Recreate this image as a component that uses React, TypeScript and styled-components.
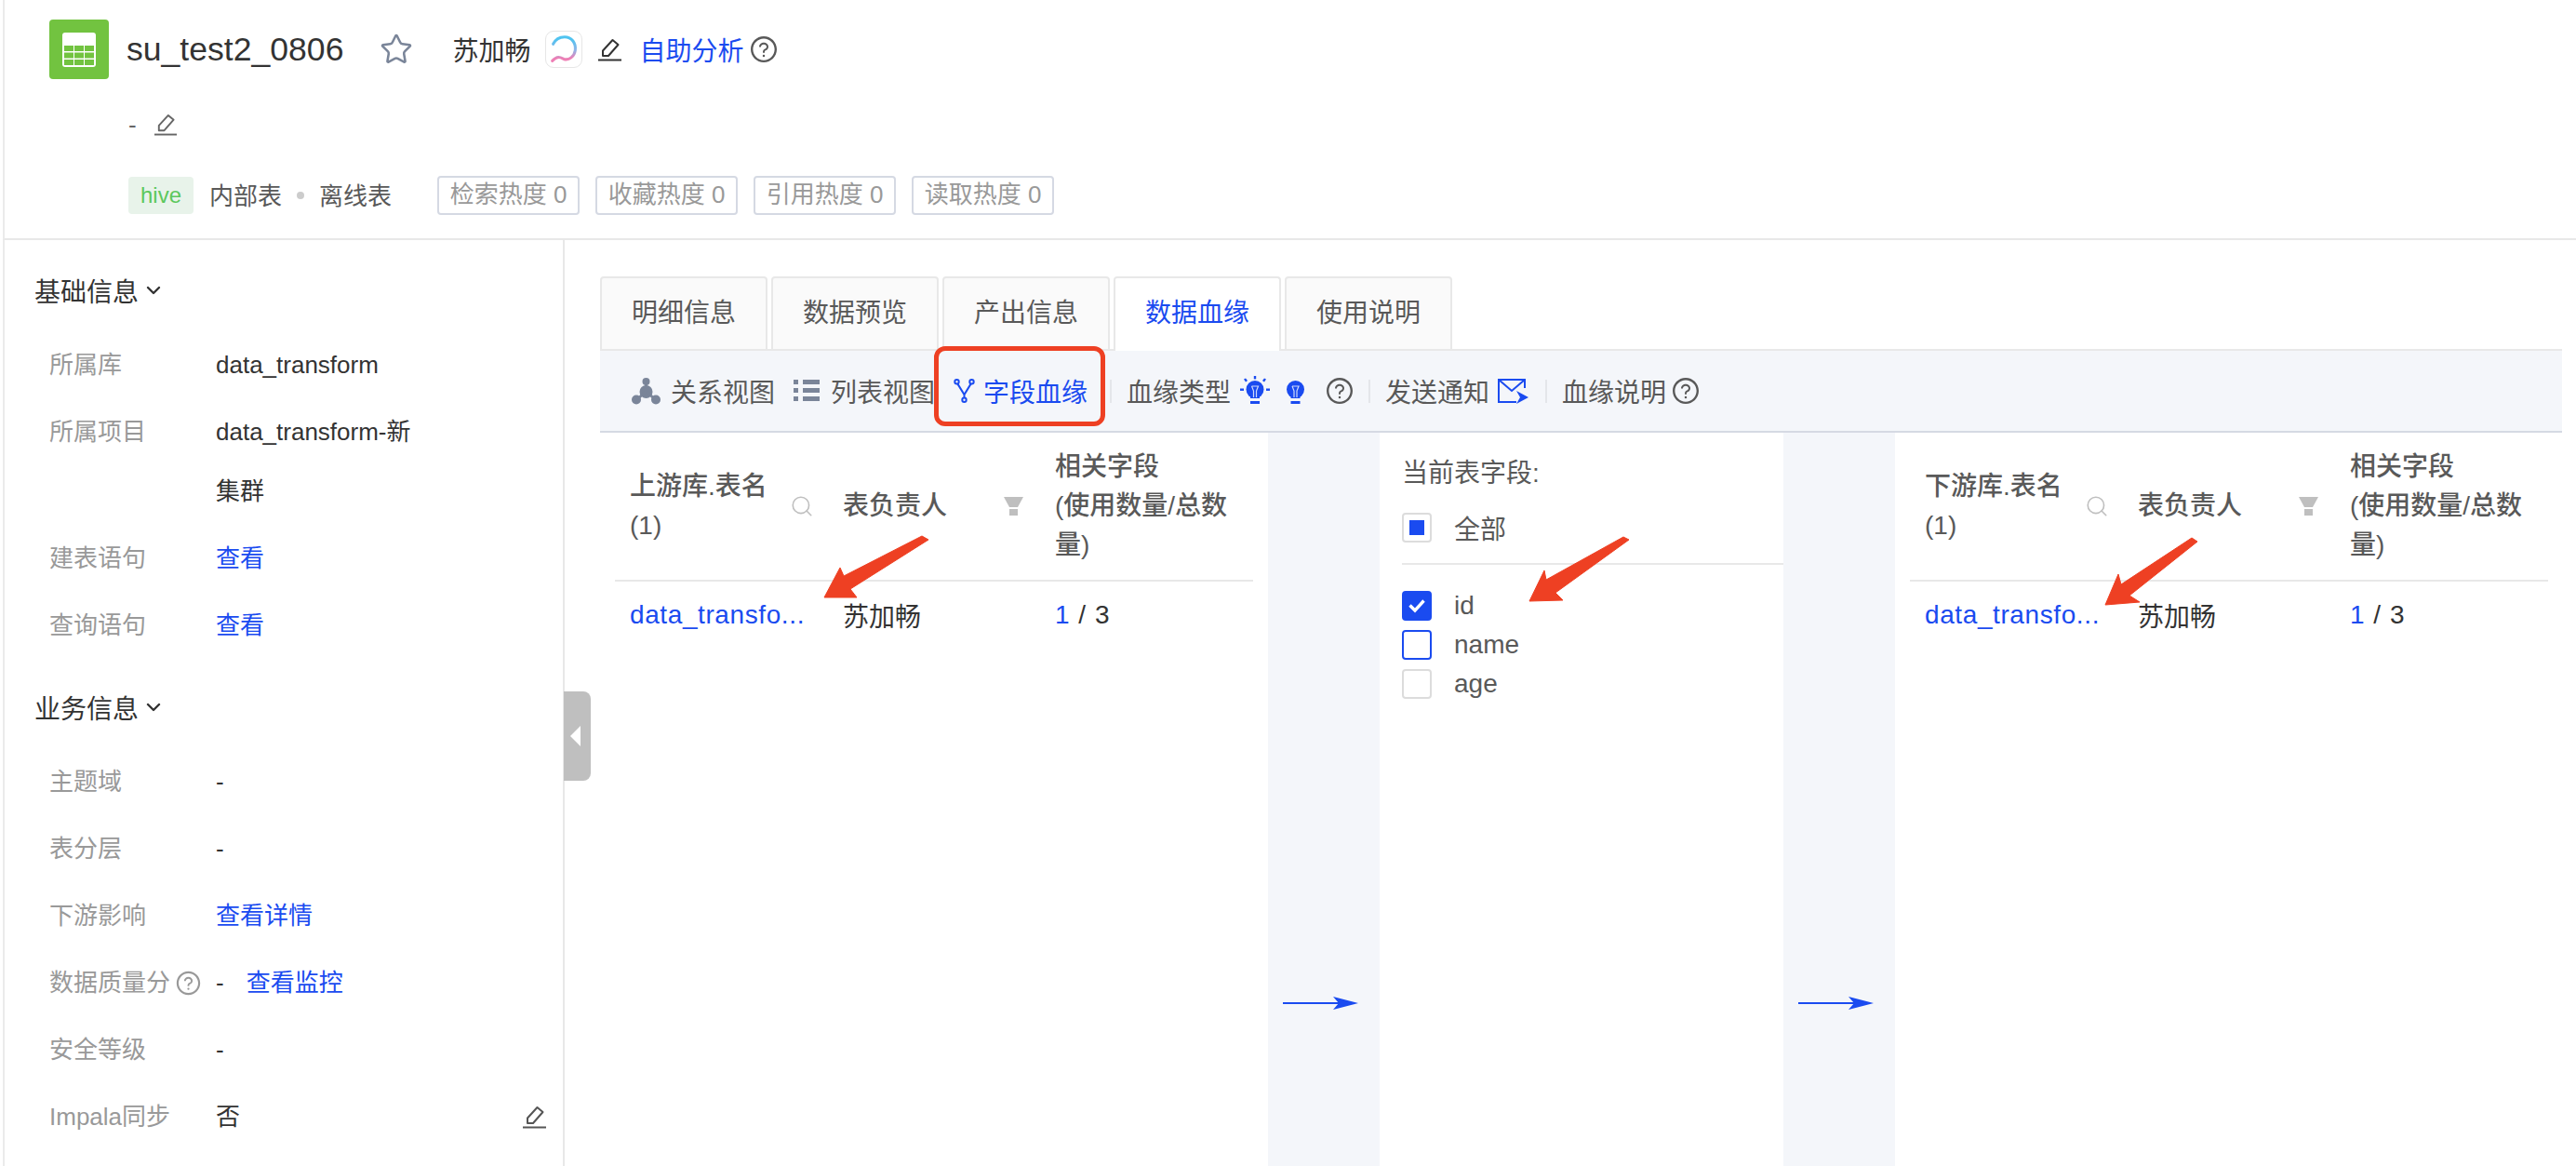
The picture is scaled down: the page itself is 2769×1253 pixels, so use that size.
import { type FC } from "react";
import { AiOutlineQuestionCircle } from "react-icons/ai";
import { ChevronDown, Search, Star } from "lucide-react";
import { createGlobalStyle, styled } from "styled-components";

const BLUE = "#1a4bf0";

const GlobalStyle = createGlobalStyle`
  html, body {
    margin: 0;
    padding: 0;
    background: #fff;
  }
  * {
    box-sizing: border-box;
  }
  body {
    font-family: "Liberation Sans", "Noto Sans CJK SC", sans-serif;
    color: #333;
  }
`;

const Page = styled.div`
  position: relative;
  width: 2769px;
  height: 1253px;
  overflow: hidden;
  background: #fff;
`;

/* header */

const Header = styled.header`
  height: 258px;
  margin-left: 3px;
  padding: 21px 0 0 48px;
  border-left: 2px solid #ebebeb;
  border-bottom: 2px solid #e8e8e8;
`;

const TitleRow = styled.div`
  display: flex;
  align-items: center;
  height: 64px;
`;

const Logo = styled.div`
  display: flex;
  align-items: center;
  justify-content: center;
  width: 64px;
  height: 64px;
  border-radius: 4px;
  background: #72c340;
  margin-right: 19px;
`;

const Title = styled.h1`
  margin: 0 39px 0 0;
  font-size: 35.6px;
  font-weight: 400;
  color: #333;
  white-space: nowrap;
`;

const Owner = styled.span`
  font-size: 28px;
  margin: 0 16px 0 42px;
  color: #333;
`;

const Avatar = styled.div`
  display: flex;
  align-items: center;
  justify-content: center;
  width: 40px;
  height: 40px;
  border: 1px solid #e6e6e6;
  border-radius: 9px;
  margin-right: 17px;
`;

const SelfLink = styled.a`
  font-size: 28px;
  color: ${BLUE};
  margin: 0 6px 0 19px;
`;

const DescRow = styled.div`
  display: flex;
  align-items: center;
  height: 32px;
  margin: 33px 0 0 85px;
  font-size: 26px;
  color: #666;
  gap: 19px;
`;

const MetaRow = styled.div`
  display: flex;
  align-items: center;
  height: 42px;
  margin: 39px 0 0 85px;
  font-size: 26px;
  color: #595959;
`;

const EngineTag = styled.span`
  height: 40px;
  line-height: 39px;
  padding: 0 13px;
  margin-right: 17px;
  border-radius: 4px;
  background: #e8f3ea;
  color: #5cc85c;
  font-size: 24px;
`;

const MetaText = styled.span`
  margin-top: -3px;
`;

const Dot = styled.i`
  width: 8px;
  height: 8px;
  margin: 0 16px;
  border-radius: 50%;
  background: #ccc;
`;

const HeatList = styled.div`
  display: flex;
  gap: 17px;
  margin-left: 49px;
`;

const HeatTag = styled.span`
  width: 153px;
  height: 42px;
  line-height: 36px;
  text-align: center;
  white-space: nowrap;
  border: 2px solid #d5d9e3;
  border-radius: 4px;
  color: #999;
  font-size: 26px;
`;

/* body */

const Body = styled.div`
  display: flex;
  height: 995px;
`;

const Sidebar = styled.aside`
  position: relative;
  flex: none;
  width: 604px;
  margin-left: 3px;
  padding: 34px 18px 0 32px;
  border-left: 2px solid #ebebeb;
  border-right: 2px solid #e8e8e8;
`;

const GroupTitle = styled.h3<{ $top?: number }>`
  display: flex;
  align-items: center;
  gap: 4px;
  height: 40px;
  margin: ${(p) => p.$top ?? 0}px 0 28px;
  font-size: 28px;
  font-weight: 400;
  color: #333;
`;

const InfoRow = styled.div`
  display: flex;
  margin: 0 0 8px 16px;
  font-size: 26px;
  line-height: 64px;
`;

const InfoLabel = styled.div`
  display: flex;
  align-items: center;
  flex: none;
  width: 179px;
  height: 64px;
  gap: 5px;
  color: #999;
  white-space: nowrap;
`;

const InfoValue = styled.div`
  flex: 1;
  max-width: 225px;
  color: #333;
`;

const TextLink = styled.a<{ $left?: number }>`
  color: ${BLUE};
  margin-left: ${(p) => p.$left ?? 0}px;
`;

const RowEdit = styled.div`
  display: flex;
  align-items: center;
  height: 64px;
  margin-left: auto;
`;

const CollapseHandle = styled.div`
  position: absolute;
  top: 485px;
  left: 601px;
  display: flex;
  align-items: center;
  justify-content: center;
  width: 29px;
  height: 96px;
  border-radius: 0 8px 8px 0;
  background: #bfbfbf;

  &::before {
    content: "";
    border-style: solid;
    border-width: 11px 11px 11px 0;
    border-color: transparent #fff transparent transparent;
    margin-right: 5px;
  }
`;

const Main = styled.main`
  flex: 1;
  display: flex;
  flex-direction: column;
  min-width: 0;
  padding: 39px 15px 0 38px;
`;

const Tabs = styled.div`
  position: relative;
  z-index: 1;
  display: flex;
  gap: 4px;
  margin-bottom: -2px;
`;

const Tab = styled.div<{ $active?: boolean }>`
  width: 180px;
  height: 80px;
  line-height: 76px;
  text-align: center;
  font-size: 28px;
  border: 2px solid #e8e8e8;
  border-bottom: ${(p) => (p.$active ? "none" : "2px solid #e8e8e8")};
  border-radius: 4px 4px 0 0;
  background: ${(p) => (p.$active ? "#fff" : "#fafafa")};
  color: ${(p) => (p.$active ? BLUE : "#595959")};
`;

const Toolbar = styled.div`
  display: flex;
  align-items: center;
  flex: none;
  height: 90px;
  padding-left: 34px;
  background: #f4f6fa;
  border-top: 2px solid #e8e8e8;
  border-bottom: 2px solid #d5d9e3;
`;

const Tool = styled.span<{ $left?: number; $gap?: number; $active?: boolean }>`
  display: flex;
  align-items: center;
  gap: ${(p) => p.$gap ?? 12}px;
  margin-left: ${(p) => p.$left ?? 0}px;
  font-size: 28px;
  white-space: nowrap;
  color: ${(p) => (p.$active ? BLUE : "#595959")};
`;

const ToolDivider = styled.i<{ $left: number }>`
  width: 2px;
  height: 25px;
  margin-left: ${(p) => p.$left}px;
  background: #e4e6ea;
`;

const IconSlot = styled.span<{ $left: number }>`
  display: flex;
  margin-left: ${(p) => p.$left}px;
`;

const Lineage = styled.div`
  flex: 1;
  display: flex;
  min-height: 0;
`;

const TablePanel = styled.section`
  flex: none;
  width: 718px;
  padding: 0 16px;
`;

const Gutter = styled.div`
  flex: none;
  width: 120px;
  padding: 606px 0 0 16px;
  background: #f4f6fa;
`;

const FieldPanel = styled.section`
  flex: none;
  width: 434px;
  padding: 24px 0 0 24px;
`;

const HeadRow = styled.div`
  display: grid;
  grid-template-columns: 229px 228px 229px;
  align-items: center;
  height: 160px;
  border-bottom: 2px solid #e8e8e8;
`;

const HeadCell = styled.div`
  display: flex;
  align-items: center;
  padding-left: 16px;
  font-size: 28px;
  font-weight: 500;
  line-height: 42px;
  color: #595959;
`;

const HeadText = styled.span<{ $width: number }>`
  flex: none;
  width: ${(p) => p.$width}px;
`;

const BodyRow = styled.div`
  display: grid;
  grid-template-columns: 229px 228px 229px;
  align-items: center;
  height: 72px;
  font-size: 28px;
`;

const BodyCell = styled.div`
  padding-left: 16px;
  color: #333;
  word-spacing: 2px;
`;

const NameLink = styled.a`
  display: block;
  white-space: nowrap;
  letter-spacing: 0.6px;
  color: ${BLUE};
`;

const FieldTitle = styled.div`
  height: 40px;
  line-height: 40px;
  font-size: 28px;
  color: #595959;
`;

const FieldRow = styled.label<{ $top: number }>`
  display: flex;
  align-items: center;
  gap: 24px;
  height: 32px;
  margin-top: ${(p) => p.$top}px;
  font-size: 28px;
  color: #595959;
`;

const Check = styled.span<{ $state: "checked" | "focus" | "half" | "off" }>`
  display: flex;
  align-items: center;
  justify-content: center;
  flex: none;
  width: 32px;
  height: 32px;
  border-radius: 4px;
  border: 2px solid
    ${(p) => (p.$state === "checked" || p.$state === "focus" ? BLUE : "#dcdcdc")};
  background: ${(p) => (p.$state === "checked" ? BLUE : "#fff")};

  &::after {
    content: "";
    display: ${(p) => (p.$state === "half" ? "block" : "none")};
    width: 16px;
    height: 16px;
    background: ${BLUE};
  }
`;

const FieldDivider = styled.div`
  height: 2px;
  margin: 22px 0 28px;
  background: #e8e8e8;
`;

/* annotations drawn on top of the screenshot */

const MarkBox = styled.div`
  position: absolute;
  z-index: 2;
  left: 1004px;
  top: 372px;
  width: 184px;
  height: 86px;
  border: 5px solid #ee4023;
  border-radius: 12px;
`;

const MarkArrow = styled.svg<{ $left: number; $top: number }>`
  position: absolute;
  z-index: 2;
  left: ${(p) => p.$left}px;
  top: ${(p) => p.$top}px;
  width: 125px;
  height: 85px;
`;

/* icons */

const TableLogo = () => (
  <svg width="36" height="37" viewBox="0 0 36 37">
    <rect width="36" height="37" rx="3" fill="#fff" />
    {[14, 21.5, 29].map((y) =>
      [2, 13, 24].map((x) => (
        <rect key={`${x}-${y}`} x={x} y={y} width="10" height="6" fill="#72c340" />
      )),
    )}
  </svg>
);

const Swirl = () => (
  <svg width="38" height="38" viewBox="0 0 40 40">
    <defs>
      <linearGradient id="swirl" x1="0" y1="0" x2="0" y2="1">
        <stop offset="0.1" stopColor="#4fc3f0" />
        <stop offset="0.55" stopColor="#8fb4e8" />
        <stop offset="0.9" stopColor="#ee7fb5" />
      </linearGradient>
    </defs>
    <path
      d="M8 14 C11 8 16 6 21 6 C29 6 34 13 33 21 C32 28 26 33 20 31 C16 29 13 27 7 33"
      fill="none"
      stroke="url(#swirl)"
      strokeWidth="3.2"
      strokeLinecap="round"
    />
  </svg>
);

const Pencil: FC<{ color: string; size?: number }> = ({ color, size = 25 }) => (
  <svg width={size} height={size} viewBox="0 0 25 25" fill="none" stroke={color} strokeWidth="2">
    <path d="M5 19 L5 13.5 L15.5 2 L21.5 7 L11 19 Z" strokeLinejoin="round" />
    <path d="M0 23.5 H25" />
  </svg>
);

const Help: FC<{ size?: number; color?: string }> = ({ size = 32, color = "#595959" }) => (
  <AiOutlineQuestionCircle size={size} color={color} />
);

const GraphIcon = () => (
  <svg width="31" height="29" viewBox="0 0 31 29" fill="#7a8599">
    <circle cx="15.5" cy="4" r="4" />
    <circle cx="15.5" cy="15" r="7" />
    <circle cx="5" cy="23.5" r="5" />
    <circle cx="26" cy="23.5" r="5" />
    <path d="M14 4 h3 v8 h-3 Z M5 22 l9 -8 2 2 -9 8 Z M26 22 l-9 -8 -2 2 9 8 Z" />
  </svg>
);

const ListIcon = () => (
  <svg width="28" height="24" viewBox="0 0 28 24" fill="#7a8599">
    <rect x="0" y="0" width="5" height="5" />
    <rect x="10" y="0" width="18" height="5" />
    <rect x="0" y="9" width="5" height="5" />
    <rect x="10" y="9" width="18" height="5" />
    <rect x="0" y="18" width="5" height="5" />
    <rect x="10" y="18" width="18" height="5" />
  </svg>
);

const BranchIcon = () => (
  <svg width="23" height="26" viewBox="0 0 23 26" fill="none" stroke={BLUE} strokeWidth="2">
    <circle cx="3.5" cy="3.2" r="2.2" />
    <circle cx="19.5" cy="3.2" r="2.2" />
    <circle cx="11.5" cy="22.8" r="2.2" />
    <path d="M4.3 5.4 L11.5 17 L18.7 5.4 M11.5 17 V20.6" />
  </svg>
);

const BulbBody = () => (
  <g>
    <circle cx="16" cy="14.5" r="9.5" fill={BLUE} />
    <path d="M11 20 h10 v4 h-10 Z" fill={BLUE} />
    <path d="M12.5 11 h7 l-2 5 v7 M12.5 11 l2 5 v7" fill="none" stroke="#cfd9fb" strokeWidth="1.2" />
    <rect x="11" y="27" width="10" height="3" fill={BLUE} />
  </g>
);

const BulbOn = () => (
  <svg width="32" height="32" viewBox="0 0 32 32" fill={BLUE}>
    <BulbBody />
    <rect x="14.8" y="0" width="2.4" height="3.4" />
    <rect x="0" y="13.5" width="4" height="2.4" />
    <rect x="28" y="13.5" width="4" height="2.4" />
    <path d="M4 3.6 l2 -1.2 2 2.6 -2 1.4 Z M28 3.6 l-2 -1.2 -2 2.6 2 1.4 Z" />
  </svg>
);

const BulbOff = () => (
  <svg width="25" height="32" viewBox="3.5 0 25 32">
    <BulbBody />
  </svg>
);

const SendIcon = () => (
  <svg width="33" height="27" viewBox="0 0 33 27" fill="none">
    <path d="M29 10 V1 H1 V25 H20 M1 1 L15 13 L29 1" stroke={BLUE} strokeWidth="2" />
    <path d="M20 13 L33 20 L20 27 L24 20 Z" fill={BLUE} />
  </svg>
);

const FunnelIcon = () => (
  <svg width="21" height="20" viewBox="0 0 21 20" fill="#bfbfbf">
    <path d="M0 0 H21 L15 11 H6 Z" />
    <rect x="6" y="13" width="9" height="7" />
  </svg>
);

const TickIcon = () => (
  <svg width="20" height="16" viewBox="0 0 20 16" fill="none" stroke="#fff" strokeWidth="3.4">
    <path d="M2.5 7.5 L8 13 L17.5 2.5" />
  </svg>
);

const FlowArrow = () => (
  <svg width="81" height="14" viewBox="0 0 81 14">
    <rect x="0" y="6" width="60" height="2" fill={BLUE} />
    <path d="M54 0 L81 7 L54 14 L60 7 Z" fill={BLUE} />
  </svg>
);

/* parts */

const LineageTable: FC<{ title: string }> = ({ title }) => (
  <TablePanel>
    <HeadRow>
      <HeadCell>
        <HeadText $width={172}>
          {title}
          <br />
          (1)
        </HeadText>
        <Search size={26} color="#bfbfbf" strokeWidth={1.5} />
      </HeadCell>
      <HeadCell>
        <HeadText $width={173}>表负责人</HeadText>
        <FunnelIcon />
      </HeadCell>
      <HeadCell>
        <span>
          相关字段
          <br />
          (使用数量/总数量)
        </span>
      </HeadCell>
    </HeadRow>
    <BodyRow>
      <BodyCell>
        <NameLink>data_transfo...</NameLink>
      </BodyCell>
      <BodyCell>苏加畅</BodyCell>
      <BodyCell>
        <TextLink>1</TextLink> / 3
      </BodyCell>
    </BodyRow>
  </TablePanel>
);

const marks = [
  { left: 880, top: 570, points: "111,6 118,10 34,63 41,72 6,72 23,40 27,49" },
  { left: 1640, top: 570, points: "105,7 111,10 32,67 40,75 4,76 20,43 22,53" },
  { left: 2258, top: 570, points: "98,8 104,12 31,70 42,77 5,80 19,47 22,58" },
];

const tabs = ["明细信息", "数据预览", "产出信息", "数据血缘", "使用说明"];
const heats = ["检索热度 0", "收藏热度 0", "引用热度 0", "读取热度 0"];

const App: FC = () => {
  return (
    <Page>
      <GlobalStyle />
      <Header>
        <TitleRow>
          <Logo>
            <TableLogo />
          </Logo>
          <Title>su_test2_0806</Title>
          <Star size={36} color="#7a8599" strokeWidth={1.7} />
          <Owner>苏加畅</Owner>
          <Avatar>
            <Swirl />
          </Avatar>
          <Pencil color="#333" />
          <SelfLink>自助分析</SelfLink>
          <Help />
        </TitleRow>
        <DescRow>
          <span>-</span>
          <Pencil color="#666" size={24} />
        </DescRow>
        <MetaRow>
          <EngineTag>hive</EngineTag>
          <MetaText>内部表</MetaText>
          <Dot />
          <MetaText>离线表</MetaText>
          <HeatList>
            {heats.map((h) => (
              <HeatTag key={h}>{h}</HeatTag>
            ))}
          </HeatList>
        </MetaRow>
      </Header>

      <Body>
        <Sidebar>
          <GroupTitle>
            基础信息 <ChevronDown size={24} strokeWidth={2.4} />
          </GroupTitle>
          <InfoRow>
            <InfoLabel>所属库</InfoLabel>
            <InfoValue>data_transform</InfoValue>
          </InfoRow>
          <InfoRow>
            <InfoLabel>所属项目</InfoLabel>
            <InfoValue>data_transform-新集群</InfoValue>
          </InfoRow>
          <InfoRow>
            <InfoLabel>建表语句</InfoLabel>
            <InfoValue>
              <TextLink>查看</TextLink>
            </InfoValue>
          </InfoRow>
          <InfoRow>
            <InfoLabel>查询语句</InfoLabel>
            <InfoValue>
              <TextLink>查看</TextLink>
            </InfoValue>
          </InfoRow>

          <GroupTitle $top={36}>
            业务信息 <ChevronDown size={24} strokeWidth={2.4} />
          </GroupTitle>
          <InfoRow>
            <InfoLabel>主题域</InfoLabel>
            <InfoValue>-</InfoValue>
          </InfoRow>
          <InfoRow>
            <InfoLabel>表分层</InfoLabel>
            <InfoValue>-</InfoValue>
          </InfoRow>
          <InfoRow>
            <InfoLabel>下游影响</InfoLabel>
            <InfoValue>
              <TextLink>查看详情</TextLink>
            </InfoValue>
          </InfoRow>
          <InfoRow>
            <InfoLabel>
              数据质量分 <Help size={29} color="#999" />
            </InfoLabel>
            <InfoValue>
              -<TextLink $left={24}>查看监控</TextLink>
            </InfoValue>
          </InfoRow>
          <InfoRow>
            <InfoLabel>安全等级</InfoLabel>
            <InfoValue>-</InfoValue>
          </InfoRow>
          <InfoRow>
            <InfoLabel>Impala同步</InfoLabel>
            <InfoValue>否</InfoValue>
            <RowEdit>
              <Pencil color="#555" />
            </RowEdit>
          </InfoRow>
          <CollapseHandle />
        </Sidebar>

        <Main>
          <Tabs>
            {tabs.map((t) => (
              <Tab key={t} $active={t === "数据血缘"}>
                {t}
              </Tab>
            ))}
          </Tabs>
          <Toolbar>
            <Tool $gap={11}>
              <GraphIcon />
              关系视图
            </Tool>
            <Tool $left={20}>
              <ListIcon />
              列表视图
            </Tool>
            <Tool $left={20} $gap={9} $active>
              <BranchIcon />
              字段血缘
            </Tool>
            <ToolDivider $left={24} />
            <Tool $left={16}>血缘类型</Tool>
            <IconSlot $left={10}>
              <BulbOn />
            </IconSlot>
            <IconSlot $left={15}>
              <BulbOff />
            </IconSlot>
            <IconSlot $left={19}>
              <Help />
            </IconSlot>
            <ToolDivider $left={15} />
            <Tool $left={16} $gap={9}>
              发送通知
              <SendIcon />
            </Tool>
            <ToolDivider $left={18} />
            <Tool $left={16} $gap={5}>
              血缘说明
              <Help />
            </Tool>
          </Toolbar>
          <Lineage>
            <LineageTable title="上游库.表名" />
            <Gutter>
              <FlowArrow />
            </Gutter>
            <FieldPanel>
              <FieldTitle>当前表字段:</FieldTitle>
              <FieldRow $top={22}>
                <Check $state="half" />
                全部
              </FieldRow>
              <FieldDivider />
              <FieldRow $top={0}>
                <Check $state="checked">
                  <TickIcon />
                </Check>
                id
              </FieldRow>
              <FieldRow $top={10}>
                <Check $state="focus" />
                name
              </FieldRow>
              <FieldRow $top={10}>
                <Check $state="off" />
                age
              </FieldRow>
            </FieldPanel>
            <Gutter>
              <FlowArrow />
            </Gutter>
            <LineageTable title="下游库.表名" />
          </Lineage>
        </Main>
      </Body>

      <MarkBox />
      {marks.map((m) => (
        <MarkArrow key={m.left} $left={m.left} $top={m.top} viewBox="0 0 125 85">
          <polygon points={m.points} fill="#ee4023" stroke="#ee4023" strokeWidth="1" strokeLinejoin="round" />
        </MarkArrow>
      ))}
    </Page>
  );
};

export default App;
